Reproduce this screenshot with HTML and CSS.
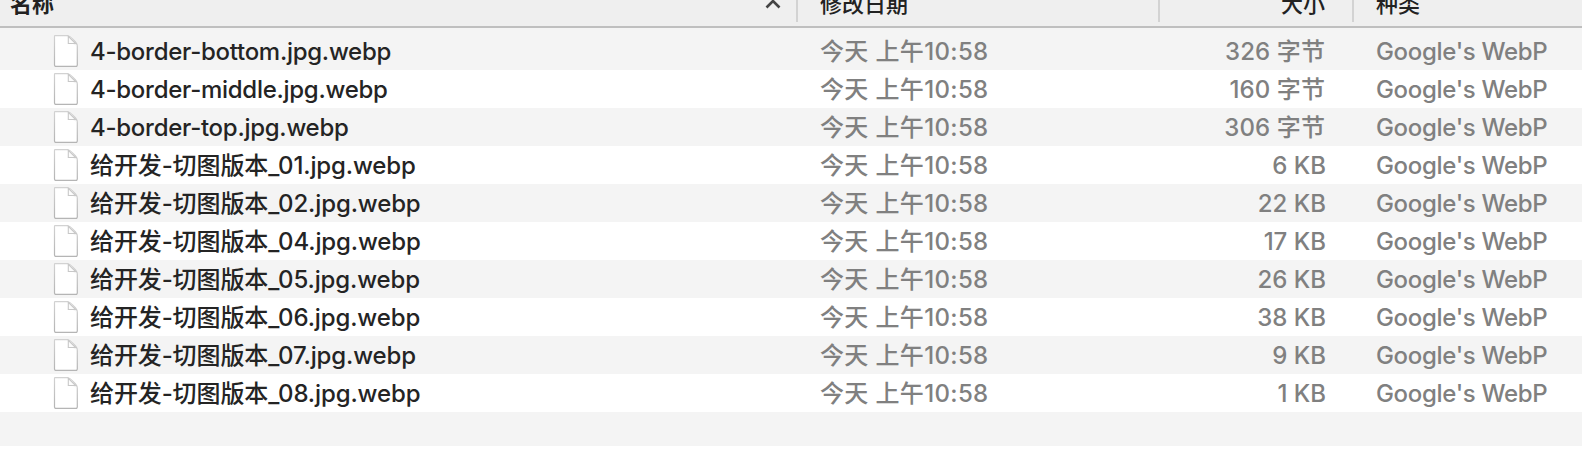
FILE: index.html
```
<!DOCTYPE html>
<html lang="zh-CN">
<head>
<meta charset="utf-8">
<title>Files</title>
<link rel="stylesheet" href="styles.css">
</head>
<body>
<svg class="defs" width="0" height="0">
  <defs>
    <linearGradient id="edge" x1="0" y1="0" x2="0" y2="1"><stop offset="0" stop-color="#d2d2d2"/><stop offset="1" stop-color="#b4b4b4"/></linearGradient>
    <symbol id="doc" viewBox="0 0 26 34">
      <path d="M2 1.7H14.6Q17 2.3 19.5 4.8L22.5 8Q24.3 10 24.3 12.5V31Q24.3 32.3 23 32.3H2.8Q1.5 32.3 1.5 31V2.5Q1.5 1.7 2 1.7Z" fill="#fff" stroke="url(#edge)" stroke-width="1.2"/>
      <path d="M2 32.5H24" stroke="#b5b5b5" stroke-width="1"/>
      <path d="M15 2.2V9.6Q20 9 24 12.3Q23 9 19.5 5.5Q17 2.7 15 2.2Z" fill="#f4f4f4"/>
      <path d="M15.3 2.3V9.5H22.6Z" fill="#fcfcfc" stroke="#c8c8c8" stroke-width="1.1"/>
    </symbol>
  </defs>
</svg>
<div class="header">
  <div class="head name"><span>名称</span><svg class="sort" width="16" height="12" viewBox="0 0 16 12"><path d="M1.5 9.5L8 3L14.5 9.5" fill="none" stroke="#444" stroke-width="2.6"/></svg></div>
  <div class="head date">修改日期</div>
  <div class="head size">大小</div>
  <div class="head kind">种类</div>
</div>
<div class="list" id="list"></div>
<script src="files.js"></script>
</body>
</html>
```
FILE: styles.css
```
body { margin: 0; background: #fff; font-family: Inter, "Noto Sans CJK SC", sans-serif; width: 1582px; height: 470px; overflow: hidden; }
.defs { display: block; }
.header, .row { display: grid; grid-template-columns: 798px 362px 194px 228px; }
.header { height: 26px; background: #efefef; border-bottom: 2px solid #bfbfbf; color: #222; font-size: 22px; font-weight: 500; overflow: hidden; }
.head { box-sizing: border-box; height: 22px; border-right: 2px solid #d3d3d3; white-space: nowrap; line-height: 8px; }
.head.kind { border: 0; }
.head.name { display: flex; justify-content: space-between; padding: 0 15px 0 10px; font-weight: 700; }
.sort { margin-top: -2px; }
.date { padding-left: 22px; }
.size { text-align: right; padding-right: 28px; }
.head.size { padding-right: 27px; }
.kind { padding-left: 22px; }
.list { background: #f4f4f4; padding-top: 4px; }
.row { height: 38px; line-height: 40px; font-size: 24px; font-weight: 500; color: #808080; white-space: nowrap; }
.row:nth-child(even) { background: #fff; }
.row.empty { height: 34px; }
.row .name { display: flex; color: #242424; padding-left: 53px; letter-spacing: -0.27px; }
.row .name.cjk { letter-spacing: -0.12px; }
.row .date { letter-spacing: 0.35px; }
.row .size.bytes { padding-right: 29px; letter-spacing: 0.1px; }
.row .kind { letter-spacing: -0.32px; }
.doc { width: 26px; height: 34px; margin: 2px 11px 0 0; }
```
FILE: files.js
```
const files = [
  ["4-border-bottom.jpg.webp", "326 字节"],
  ["4-border-middle.jpg.webp", "160 字节"],
  ["4-border-top.jpg.webp", "306 字节"],
  ["给开发-切图版本_01.jpg.webp", "6 KB"],
  ["给开发-切图版本_02.jpg.webp", "22 KB"],
  ["给开发-切图版本_04.jpg.webp", "17 KB"],
  ["给开发-切图版本_05.jpg.webp", "26 KB"],
  ["给开发-切图版本_06.jpg.webp", "38 KB"],
  ["给开发-切图版本_07.jpg.webp", "9 KB"],
  ["给开发-切图版本_08.jpg.webp", "1 KB"],
];
document.getElementById("list").innerHTML = files.map(([name, size]) => `
  <div class="row">
    <div class="name${name.startsWith("给") ? " cjk" : ""}"><svg class="doc"><use href="#doc"/></svg><span>${name}</span></div>
    <div class="date">今天 上午10:58</div>
    <div class="size${size.endsWith("字节") ? " bytes" : ""}">${size}</div>
    <div class="kind">Google's WebP</div>
  </div>`).join("") + '<div class="row empty"></div>';
```
